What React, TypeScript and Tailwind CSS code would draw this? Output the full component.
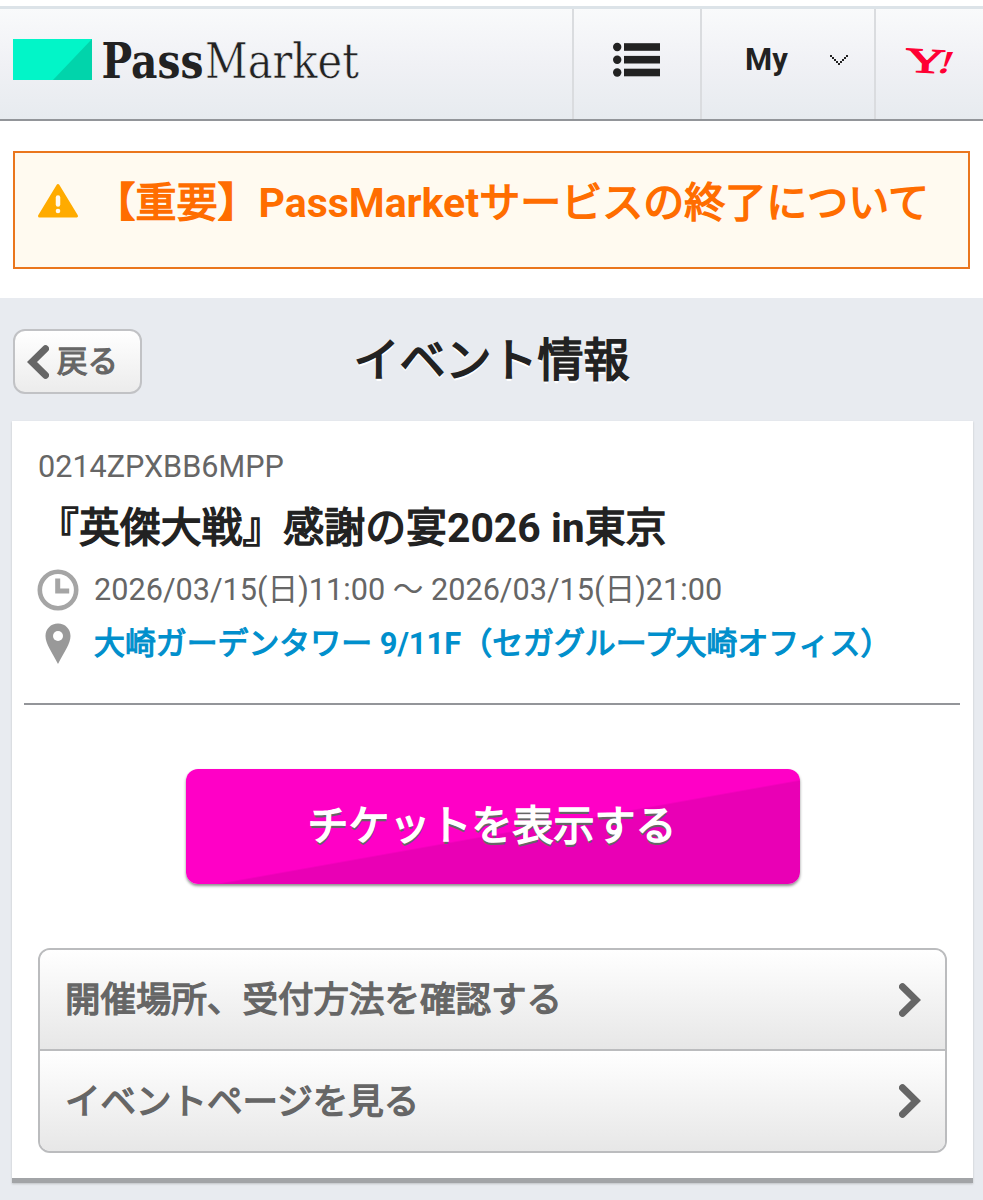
import React from 'react';
import clsx from 'clsx';

const links = ['開催場所、受付方法を確認する', 'イベントページを見る'];

const Logo: React.FC = () => (
    <svg width="348" height="44" viewBox="0 0 348 44" className="block overflow-visible">
        <rect y="2" width="79" height="41" fill="#02f5c8" />
        <path d="M79 2v41H40z" fill="#01d4ab" />
        <text x="88.500" y="41" fontFamily="'DejaVu Serif', serif" fontWeight="700" fontSize="49" fill="#222" textLength="102" lengthAdjust="spacingAndGlyphs">Pass</text>
        <text x="192" y="41" fontFamily="'DejaVu Serif', serif" fontSize="49" fill="#222" stroke="#f2f3f6" strokeWidth="0.6" textLength="154" lengthAdjust="spacingAndGlyphs">Market</text>
    </svg>
);

const Chevron: React.FC<{ className?: string }> = ({ className }) => (
    <svg width="22" height="34" viewBox="0 0 22 34" fill="none" stroke="#666" strokeWidth="7" strokeLinecap="round" className={className}>
        <path d="M3.5 3.8L17 17 3.5 30.2" />
    </svg>
);

const Header: React.FC = () => (
    <header className="mt-[6px] h-[115px] flex border-t-[3px] border-t-[#dce3e8] border-b-2 border-b-[#929599] bg-linear-to-b from-[#f9fafb] via-[#f0f1f5] to-[#e7ebef]">
        <div className="w-[572px] pl-[13px] pt-[28px]">
            <Logo />
        </div>
        <div className="w-[128px] border-l-2 border-[#dadcdf] pl-[39px] pt-[33px]">
            <svg width="50" height="36" viewBox="0 0 50 36" fill="#222">
                {[5, 17.7, 30.5].map(y => (
                    <g key={y}>
                        <circle cx="4.2" cy={y} r="4.2" />
                        <rect x="11" y={y - 3.8} width="36" height="7.6" />
                    </g>
                ))}
            </svg>
        </div>
        <div className="w-[174px] border-l-2 border-[#dadcdf] flex items-center pl-[43px] pb-[7px] text-[31px] font-bold text-[#222]">
            <span className="w-[85px]">My</span>
            <svg width="18" height="11" viewBox="0 0 18 11" fill="#222" shapeRendering="crispEdges">
                {[0, 2, 4, 6, 8, 10, 12, 14, 16].map(x => (
                    <rect key={x} x={x} y={8 - Math.abs(8 - x)} width="2" height="2" />
                ))}
            </svg>
        </div>
        <div className="flex-1 border-l-2 border-[#dadcdf] pl-[28px] pt-[36px]">
            <svg width="54" height="32" viewBox="0 0 54 32" fill="#ff0033" stroke="#ff0033" fontFamily="'Liberation Serif', serif" className="overflow-visible">
                <text transform="translate(1 26.5) rotate(3)" fontSize="35" strokeWidth="1.1" textLength="40" lengthAdjust="spacingAndGlyphs">Y</text>
                <text transform="translate(32 27.5) skewX(-20) scale(1.25 1)" fontSize="32" fontWeight="700" strokeWidth="0">!</text>
            </svg>
        </div>
    </header>
);

const App: React.FC = () => {
    return (
        <div className="w-[983px] h-[1200px] overflow-hidden bg-white font-[Roboto,'Noto_Sans_CJK_JP',sans-serif] flow-root">
            <Header />

            {/* service notice */}
            <div className="mt-[30px] mx-[13px] h-[118px] border-2 border-[#ea761d] bg-[#fffaf0] flex items-start pl-[22px] pt-[24px]">
                <svg width="42" height="36" viewBox="0 0 42 36" className="mt-[6px] shrink-0">
                    <path d="M21 2.5L39.5 33H2.5z" fill="#ffab00" stroke="#ffab00" strokeWidth="3" strokeLinejoin="round" />
                    <path d="M21 14.500v7" stroke="#fffaf0" strokeWidth="4.5" strokeLinecap="round" />
                    <circle cx="21" cy="28" r="2.3" fill="#fffaf0" />
                </svg>
                <p className="ml-[15.5px] mt-px text-[41px] leading-[50px] text-[#ff6d00] whitespace-nowrap [-webkit-text-stroke:1.5px_#ff6d00]">
                    【重要】<b className="font-bold [-webkit-text-stroke:0]">PassMarket</b>サービスの終了について
                </p>
            </div>

            <main className="mt-[29px] h-[902px] bg-[#e8ebf0] flow-root">
                <div className="mt-[31px] h-[65px] px-[13px] grid grid-cols-[129px_1fr_129px]">
                    <button className="h-[65px] flex items-center rounded-xl border-2 border-[#c1c2c5] bg-linear-to-b from-white to-[#ececec] pl-[12px] text-[30.5px] text-[#666] [-webkit-text-stroke:1.2px_#666]">
                        <Chevron className="rotate-180 mr-[8px]" />
                        <span className="whitespace-nowrap">戻る</span>
                    </button>
                    <h1 className="text-center text-[46px] leading-[62px] font-normal text-[#222] [-webkit-text-stroke:1.7px] [text-shadow:0_2.5px_0_#fff]">イベント情報</h1>
                </div>

                <section className="mt-[27px] ml-[12px] mr-[10px] h-[762px] bg-white border-b-[5px] border-[#a2a4a7] shadow-[0_1px_2px_rgba(0,0,0,0.18)] flow-root">
                    <div className="pl-[26px] pt-[25px] text-[#666] whitespace-nowrap">
                        <p className="text-[30.6px] leading-[42px]">0214ZPXBB6MPP</p>
                        <h2 className="mt-[10px] text-[40.9px] leading-[60px] font-normal text-[#222] [-webkit-text-stroke:1.5px_#222]">
                            『英傑大戦』感謝の宴<b className="font-bold [-webkit-text-stroke:0]">2026 in</b>東京
                        </h2>
                        <div className="mt-[9px] h-[46px] flex items-center">
                            <svg width="42" height="42" viewBox="0 0 42 42" fill="none" stroke="#a5a5a5" className="-ml-px -mt-px mr-[15px]">
                                <circle cx="21" cy="21" r="18.2" strokeWidth="4.6" />
                                <path d="M20.700 9.500v12.500h11.500" strokeWidth="5" />
                            </svg>
                            <span className="text-[30.65px]">2026/03/15(日)11:00 〜 2026/03/15(日)21:00</span>
                        </div>
                        <div className="mt-[8px] h-[46px] flex items-center">
                            <svg width="26" height="42" viewBox="0 0 26 42" className="ml-[7px] mr-[23px]">
                                <path d="M13 0.5C5.8 .5.5 6 .5 13 .5 21 7 29 13 41 19 29 25.500 21 25.500 13 25.500 6 20.200.5 13 .5z" fill="#999" />
                                <circle cx="13" cy="13" r="5" fill="#fff" />
                            </svg>
                            <a className="text-[30.9px] text-[#008fcc] [-webkit-text-stroke:1.2px_#008fcc]">
                                大崎ガーデンタワー <b className="font-bold [-webkit-text-stroke:0]">9/11F</b>（セガグループ大崎オフィス）
                            </a>
                        </div>
                    </div>

                    <hr className="mt-[36px] ml-[12px] mr-[13px] border-t-2 border-[#939599]" />

                    <button className="mt-[64px] ml-[174px] w-[614px] h-[115px] block rounded-xl bg-[linear-gradient(169.9deg,#ff00c6_53.4%,#e900b5_54.2%)] shadow-[0_2px_3px_rgba(0,0,0,0.45)] pr-[2px] text-[41px] text-white [-webkit-text-stroke:1.5px] [text-shadow:0_2.5px_0_#666]">
                        チケットを表示する
                    </button>

                    <ul className="mt-[64px] ml-[26px] mr-[26px] h-[205px] rounded-xl border-2 border-[#bbbcbe] overflow-hidden">
                        {links.map((label, i) => (
                            <li
                                key={label}
                                className={clsx(
                                    'flex items-center justify-between pl-[25px] pr-[24px] bg-linear-to-b from-white to-[#e7e7e7] text-[35.5px] text-[#666] [-webkit-text-stroke:1.4px_#666]',
                                    i > 0 ? 'h-[102px] border-t-2 border-[#bbbcbe]' : 'h-[99px]'
                                )}
                            >
                                <span className="pt-[3px]">{label}</span>
                                <Chevron />
                            </li>
                        ))}
                    </ul>
                </section>
            </main>
        </div>
    );
};

export default App;
